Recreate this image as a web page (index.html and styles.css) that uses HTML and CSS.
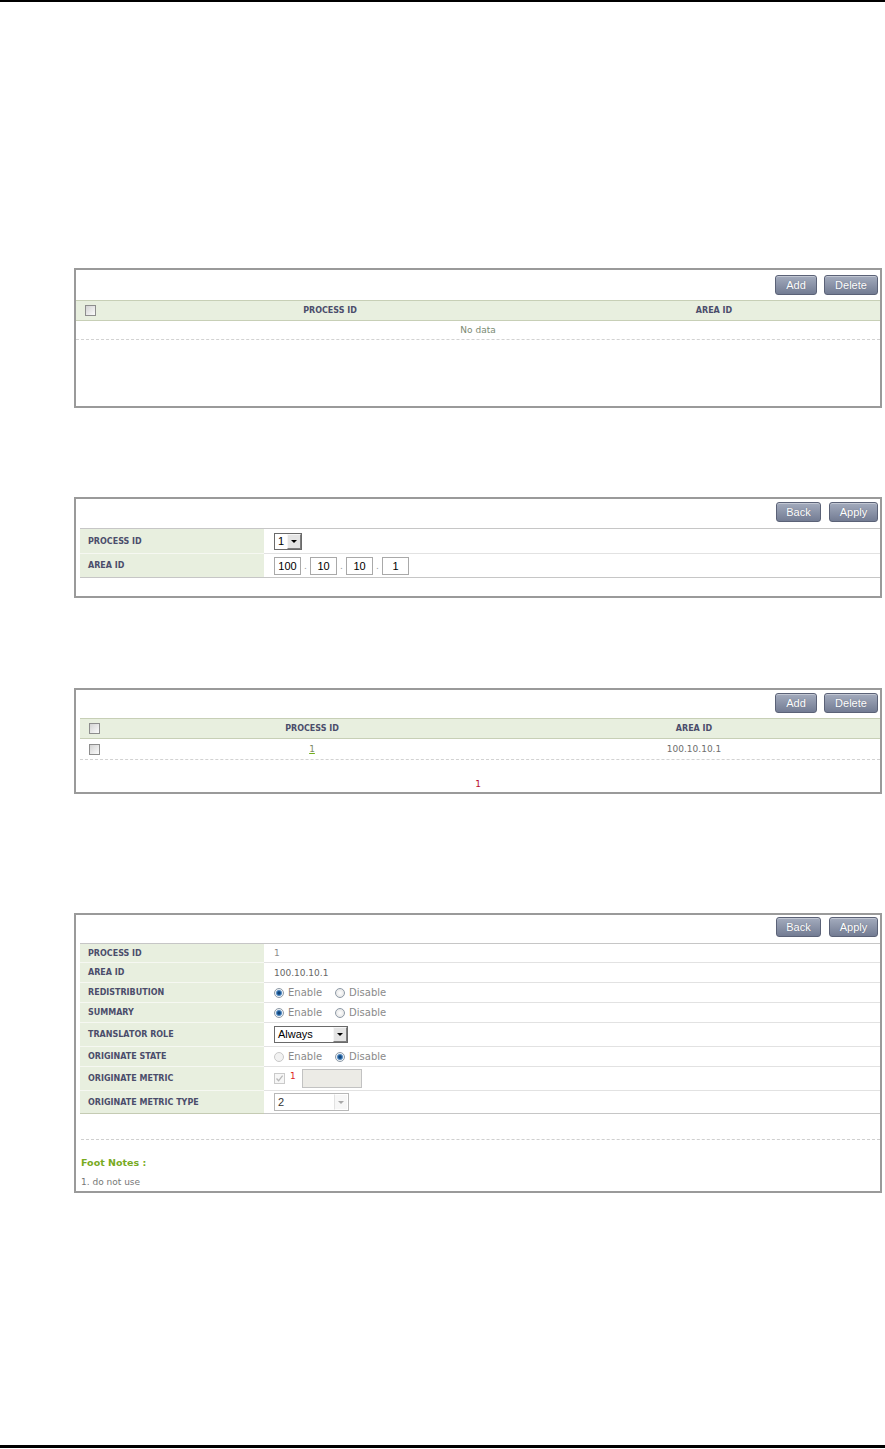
FILE: index.html
```html
<!DOCTYPE html>
<html>
<head>
  <meta charset="utf-8">
  <meta name="viewport" content="width=device-width, initial-scale=1.0">
  <title>OSPF NSSA</title>
  <link rel="stylesheet" href="styles.css">
</head>
<body>
  <div class="page-rule page-rule-top"></div>

  <div class="page">

    <!-- NSSA list (empty) -->
    <div class="panel panel-empty">
      <div class="toolbar">
        <button class="btn btn-add">Add</button>
        <button class="btn btn-delete">Delete</button>
      </div>
      <div class="list list-wide">
        <div class="list-head">
          <div class="list-check"><span class="check"></span></div>
          <div>PROCESS ID</div>
          <div>AREA ID</div>
        </div>
        <div class="list-empty">No data</div>
      </div>
    </div>

    <!-- Add NSSA -->
    <div class="panel panel-add">
      <div class="toolbar toolbar-form">
        <button class="btn btn-back">Back</button>
        <button class="btn btn-apply">Apply</button>
      </div>
      <div class="form">
        <div class="form-row row-first row-tall">
          <div class="form-label">PROCESS ID</div>
          <div class="form-value">
            <span class="select select-small">
              <span class="select-text">1</span>
              <span class="select-arrow"></span>
            </span>
          </div>
        </div>
        <div class="form-row row-tall">
          <div class="form-label">AREA ID</div>
          <div class="form-value">
            <span class="ip-box">100</span><span class="ip-dot">.</span><span class="ip-box">10</span><span class="ip-dot">.</span><span class="ip-box">10</span><span class="ip-dot">.</span><span class="ip-box">1</span>
          </div>
        </div>
      </div>
    </div>

    <!-- NSSA list (one entry) -->
    <div class="panel panel-list">
      <div class="toolbar toolbar-form">
        <button class="btn btn-add">Add</button>
        <button class="btn btn-delete">Delete</button>
      </div>
      <div class="list list-inset">
        <div class="list-head">
          <div class="list-check"><span class="check"></span></div>
          <div>PROCESS ID</div>
          <div>AREA ID</div>
        </div>
        <div class="list-row">
          <div class="list-check"><span class="check"></span></div>
          <div><a class="link" href="#">1</a></div>
          <div>100.10.10.1</div>
        </div>
      </div>
      <div class="pager">1</div>
    </div>

    <!-- NSSA detail -->
    <div class="panel panel-detail">
      <div class="toolbar toolbar-detail">
        <button class="btn btn-back">Back</button>
        <button class="btn btn-apply">Apply</button>
      </div>
      <div class="form">
        <div class="form-row row-first">
          <div class="form-label">PROCESS ID</div>
          <div class="form-value value-light">1</div>
        </div>
        <div class="form-row">
          <div class="form-label">AREA ID</div>
          <div class="form-value">100.10.10.1</div>
        </div>
        <div class="form-row">
          <div class="form-label">REDISTRIBUTION</div>
          <div class="form-value">
            <span class="option"><span class="radio on"></span>Enable</span>
            <span class="option"><span class="radio"></span>Disable</span>
          </div>
        </div>
        <div class="form-row">
          <div class="form-label">SUMMARY</div>
          <div class="form-value">
            <span class="option"><span class="radio on"></span>Enable</span>
            <span class="option"><span class="radio"></span>Disable</span>
          </div>
        </div>
        <div class="form-row row-tall">
          <div class="form-label">TRANSLATOR ROLE</div>
          <div class="form-value">
            <span class="select select-role">
              <span class="select-text">Always</span>
              <span class="select-arrow"></span>
            </span>
          </div>
        </div>
        <div class="form-row">
          <div class="form-label">ORIGINATE STATE</div>
          <div class="form-value">
            <span class="option"><span class="radio radio-disabled"></span>Enable</span>
            <span class="option"><span class="radio on"></span>Disable</span>
          </div>
        </div>
        <div class="form-row row-tall">
          <div class="form-label">ORIGINATE METRIC</div>
          <div class="form-value">
            <span class="check check-disabled">
              <svg width="9" height="9" viewBox="0 0 9 9"><path d="M1.5 4.5 L3.6 6.8 L7.6 1.6" fill="none" stroke="#b8b8b8" stroke-width="1.3"/></svg>
            </span>
            <span class="note-ref">1</span>
            <span class="text-disabled"></span>
          </div>
        </div>
        <div class="form-row row-tall row-last">
          <div class="form-label">ORIGINATE METRIC TYPE</div>
          <div class="form-value">
            <span class="select select-type select-disabled">
              <span class="select-text">2</span>
              <span class="select-arrow"></span>
            </span>
          </div>
        </div>
      </div>
      <div class="notes">
        <div class="notes-title">Foot Notes :</div>
        <div class="notes-item">1. do not use</div>
      </div>
    </div>

  </div>

  <div class="page-rule page-rule-bottom"></div>
</body>
</html>
```

FILE: styles.css
```css
/* Base page */
body {
  margin: 0;
  padding: 0;
  background-color: #ffffff;
  font-family: "DejaVu Sans", Verdana, sans-serif;
  color: #666666;
}

.page-rule {
  background-color: #000000;
}
.page-rule-top {
  height: 2px;
}
.page-rule-bottom {
  height: 3px;
  margin-top: 252px;
}

.page {
  padding-left: 74px;
}

/* Panel box around each screen */
.panel {
  width: 808px;
  box-sizing: border-box;
  border: 2px solid #9a9a9a;
  background-color: #ffffff;
}
.panel-empty {
  margin-top: 266px;
  padding-bottom: 66px;
}
.panel-add {
  margin-top: 89px;
  padding-bottom: 18px;
}
.panel-list {
  margin-top: 90px;
}
.panel-detail {
  margin-top: 119px;
}

/* Button bar */
.toolbar {
  display: flex;
  justify-content: flex-end;
  gap: 7px;
  padding: 5px 2px 5px;
}
.toolbar-form {
  padding: 3px 2px 5px;
}
.toolbar-detail {
  padding: 2px 2px 6px;
  gap: 8px;
}
.panel-add .toolbar {
  padding: 3px 2px 6px;
  gap: 8px;
}

.btn {
  height: 20px;
  padding: 0;
  box-sizing: border-box;
  border: 1px solid #5b6277;
  border-radius: 3px;
  background: linear-gradient(#a3abbd, #737c93);
  box-shadow: inset 0 1px 0 rgba(255, 255, 255, 0.35);
  color: #ffffff;
  font-family: "Liberation Sans", Arial, sans-serif;
  font-size: 11px;
  text-align: center;
  text-shadow: 0 0 1px rgba(40, 45, 60, 0.4);
  cursor: pointer;
}
.btn-add    { width: 42px; }
.btn-delete { width: 54px; }
.btn-back   { width: 45px; }
.btn-apply  { width: 49px; }

/* List tables */
.list-inset {
  margin-left: 4px;
}
.list-head,
.list-row {
  display: grid;
  align-items: center;
  text-align: center;
  box-sizing: border-box;
}
.list-wide .list-head {
  grid-template-columns: 36px 436px 1fr;
}
.list-inset .list-head,
.list-inset .list-row {
  grid-template-columns: 36px 392px 1fr;
}
.list-head {
  height: 21px;
  background-color: #e8efdf;
  border-top: 1px solid #c7cfb6;
  border-bottom: 1px solid #c7cfb6;
  color: #4b4d6b;
  font-size: 8px;
  font-weight: bold;
}
.list-check {
  text-align: left;
  padding-left: 9px;
  line-height: 0;
}
.list-row {
  height: 21px;
  border-bottom: 1px dashed #d2d2d2;
  font-size: 9px;
  color: #6e6e6e;
}
.list-empty {
  height: 19px;
  box-sizing: border-box;
  border-bottom: 1px dashed #d2d2d2;
  text-align: center;
  line-height: 18px;
  font-size: 9px;
  color: #7b8a72;
}

.link {
  color: #7d8a68;
  text-decoration: underline;
  text-decoration-color: #72b01c;
}

.pager {
  padding: 18px 0 2px;
  line-height: 12px;
  text-align: center;
  font-size: 9px;
  color: #b80f2e;
}

/* Checkbox look-alike */
.check {
  display: inline-block;
  width: 11px;
  height: 11px;
  box-sizing: border-box;
  border: 1px solid #8d8d8d;
  background: linear-gradient(135deg, #d3d3d3, #fbfbfb);
  vertical-align: middle;
}
.check-disabled {
  border-color: #cacaca;
  background: #f6f6f6;
  line-height: 0;
}

/* Form tables */
.form {
  margin-left: 4px;
}
.form-row {
  display: grid;
  grid-template-columns: 184px 1fr;
  height: 20px;
}
.form-row.row-tall {
  height: 24px;
}
.form-row.row-first {
  height: 19px;
}
.panel-add .form-row.row-first {
  height: 25px;
}
.form-label,
.form-value {
  display: flex;
  align-items: center;
  box-sizing: border-box;
}
.form-label {
  padding-left: 8px;
  background-color: #e8efdf;
  border-top: 1px solid #f6f8f2;
  color: #4b4d6b;
  font-size: 8px;
  font-weight: bold;
}
.form-value {
  padding-left: 10px;
  border-top: 1px solid #e2e2e2;
  font-size: 9px;
  color: #666666;
}
.row-first .form-label,
.row-first .form-value {
  border-top-color: #c6c6c6;
}
.panel-add .form-row:last-child .form-label,
.panel-add .form-row:last-child .form-value,
.row-last .form-label,
.row-last .form-value {
  border-bottom: 1px solid #c6c6c6;
}
.panel-add .form-row:last-child,
.row-last {
  height: 25px;
}
.row-last .form-label {
  border-bottom-color: #c5cbb3;
}
.value-light {
  color: #8c8c8c;
}

/* Radio buttons */
.option {
  display: inline-flex;
  align-items: center;
  gap: 4px;
  margin-right: 13px;
  font-size: 10px;
  color: #8a8a8a;
}
.radio {
  display: inline-block;
  width: 10px;
  height: 10px;
  box-sizing: border-box;
  border: 1px solid #8e9aa6;
  border-radius: 50%;
  background: radial-gradient(circle, #ffffff, #dedede);
}
.radio.on {
  background: radial-gradient(circle, #0d3560 0, #1f5c99 1.6px, #6f9fcf 2.8px, #eef2f6 3.4px);
}
.radio-disabled {
  border-color: #c9c9c9;
  background: #f2f2f2;
}

/* Drop downs */
.select {
  display: inline-flex;
  height: 17px;
  box-sizing: border-box;
  border: 1px solid #6a6a6a;
  background-color: #ffffff;
  font-family: "Liberation Sans", Arial, sans-serif;
  font-size: 11px;
  color: #000000;
}
.select-text {
  flex: 1;
  padding: 0 3px;
  line-height: 15px;
}
.select-arrow {
  display: flex;
  align-items: center;
  justify-content: center;
  width: 14px;
  box-sizing: border-box;
  border: 1px solid;
  border-color: #f6f6f6 #7d7d7d #7d7d7d #f6f6f6;
  background-color: #e4e4e4;
}
.select-arrow::after {
  content: "";
  border-left: 3px solid transparent;
  border-right: 3px solid transparent;
  border-top: 3px solid #000000;
}
.select-small {
  width: 28px;
}
.select-role {
  width: 74px;
  height: 17px;
}
.select-type {
  width: 75px;
  height: 18px;
}
.select-disabled {
  border-color: #b8b8b8;
  color: #333333;
}
.select-disabled .select-text {
  line-height: 16px;
}
.select-disabled .select-arrow {
  border-color: #ffffff;
  border-left-color: #e2e2e2;
  background-color: #f7f7f7;
}
.select-disabled .select-arrow::after {
  border-top-color: #a8a8a8;
}

/* IP address fields */
.ip-box {
  display: inline-block;
  width: 27px;
  height: 18px;
  box-sizing: border-box;
  border: 1px solid #a9a9a9;
  text-align: center;
  line-height: 16px;
  font-family: "Liberation Sans", Arial, sans-serif;
  font-size: 11px;
  color: #000000;
}
.ip-dot {
  display: inline-block;
  width: 9px;
  text-align: center;
  color: #9a9a9a;
}

/* Disabled metric field */
.note-ref {
  align-self: flex-start;
  margin: 4px 6px 0 5px;
  font-size: 9px;
  color: #e02424;
}
.text-disabled {
  display: inline-block;
  width: 60px;
  height: 19px;
  box-sizing: border-box;
  border: 1px solid #c2c2c2;
  background-color: #ecebe6;
}

/* Foot notes */
.notes {
  margin: 25px 0 0 5px;
  padding: 17px 0 3px;
  border-top: 1px dashed #cfcfcf;
}
.notes-title {
  line-height: 12px;
  margin-bottom: 7px;
  font-size: 9.5px;
  font-weight: bold;
  color: #78ab1f;
}
.notes-item {
  line-height: 12px;
  font-size: 9px;
  color: #777777;
}
```
